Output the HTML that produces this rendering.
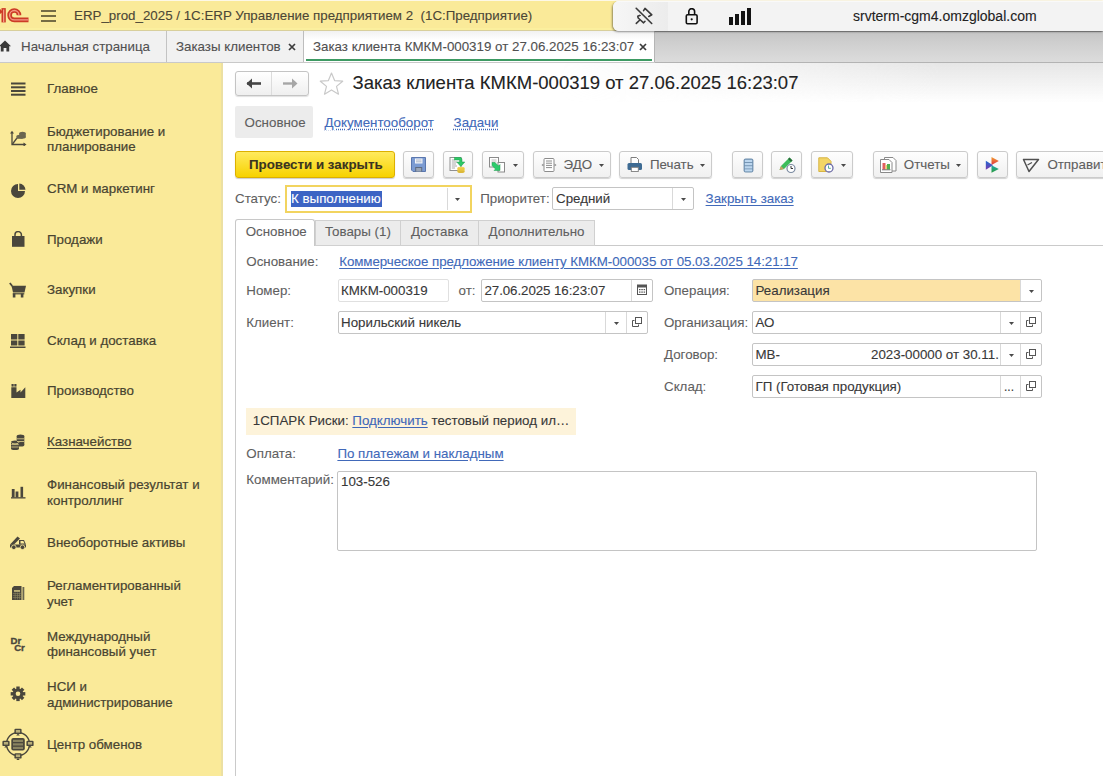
<!DOCTYPE html>
<html><head><meta charset="utf-8"><style>
*{box-sizing:border-box;margin:0;padding:0}
html,body{width:1103px;height:776px;overflow:hidden;background:#fff;font-family:"Liberation Sans",sans-serif;font-size:13.33px;color:#4d4d4d}
.a{position:absolute;white-space:nowrap;-webkit-text-stroke:0.1px currentColor}
.btn{position:absolute;top:151px;height:27px;border:1px solid #cbcbcb;border-radius:3px;background:linear-gradient(#fefefe,#f0f0f0);box-shadow:0 1px 1px rgba(0,0,0,.18)}
.fld{position:absolute;height:23px;border:1px solid #c4c4c4;border-radius:2px;background:#fff}
.dv{position:absolute;width:1px;background:#d9d9d9}
</style></head><body>
<div class="a" style="left:0px;top:0px;width:1103px;height:31px;background:#faea99"></div>
<div class="a" style="left:0px;top:0px;width:1103px;height:1px;background:#fdf8e6"></div>
<div class="a" style="left:0px;top:28px;width:1103px;height:2px;background:#fbef9e"></div>
<div class="a" style="left:0px;top:30px;width:1103px;height:1px;background:#d8cf9c"></div>
<svg class="a" style="left:0px;top:0px" width="30" height="30" viewBox="0 0 30 30"><g fill="none" stroke-linecap="butt">
<path d="M3.65 22.4V8.1" stroke="#cc3b26" stroke-width="4.3"/>
<path d="M1.6 10.5L-1.5 13" stroke="#cc3b26" stroke-width="3.6"/>
<path d="M28.5 19.9H14.3A4.7 4.7 0 0 1 14.3 10.5A4.7 4.7 0 0 1 19 15.2" stroke="#cc3b26" stroke-width="4.6"/>
<path d="M3.65 22.4V9.4" stroke="#f39a86" stroke-width="1.3"/>
<path d="M28.5 19.9H14.3A4.7 4.7 0 0 1 14.3 10.5A4.7 4.7 0 0 1 19 15.2" stroke="#f39a86" stroke-width="1.3"/>
</g></svg>
<div class="a" style="left:41px;top:10px;width:15px;height:2px;background:#756c45"></div>
<div class="a" style="left:41px;top:15px;width:15px;height:2px;background:#756c45"></div>
<div class="a" style="left:41px;top:20px;width:15px;height:2px;background:#756c45"></div>
<div class="a" style="left:74px;top:7.68px;font-size:13.33px;line-height:16px;color:#4b4636;font-weight:normal;">ERP_prod_2025 / 1C:ERP Управление предприятием 2&nbsp; (1С:Предприятие)</div>
<div class="a" style="left:0px;top:31px;width:1103px;height:31px;background:#f1f1f1"></div>
<div class="a" style="left:0px;top:62px;width:1103px;height:1px;background:#c9c9c9"></div>
<div class="a" style="left:655px;top:62px;width:448px;height:1px;background:#b3b3b3"></div>
<div class="a" style="left:560px;top:63px;width:543px;height:40px;background:linear-gradient(#e6e6e6,rgba(255,255,255,0));-webkit-mask-image:linear-gradient(90deg,transparent,#000 70%)"></div>
<div class="a" style="left:655px;top:31px;width:448px;height:31px;background:linear-gradient(#c4c4c4,#cecece 35%,#dcdcdc)"></div>
<div class="a" style="left:655px;top:31px;width:448px;height:1px;background:#a0a0a0"></div>
<div class="a" style="left:166px;top:31px;width:1px;height:31px;background:#c3c3c3"></div>
<div class="a" style="left:303px;top:31px;width:1px;height:31px;background:#bdbdbd"></div>
<div class="a" style="left:654px;top:31px;width:1px;height:31px;background:#b5b5b5"></div>
<div class="a" style="left:304px;top:31px;width:350px;height:31px;background:linear-gradient(#f1f1f1,#fff 30%)"></div>
<div class="a" style="left:306px;top:59px;width:346px;height:2px;background:#3d9a63"></div>
<svg class="a" style="left:-1px;top:40px" width="12" height="12" viewBox="0 0 12 12"><path d="M6 0.5L12 6.2H10.2V11.5H7.4V8H4.6V11.5H1.8V6.2H0Z" fill="#3a3a3a"/></svg>
<div class="a" style="left:21px;top:38.78px;font-size:13.33px;line-height:16px;color:#505050;font-weight:normal;">Начальная страница</div>
<div class="a" style="left:176px;top:38.78px;font-size:13.33px;line-height:16px;color:#505050;font-weight:normal;">Заказы клиентов</div>
<svg class="a" style="left:288px;top:43px" width="8" height="8" viewBox="0 0 8 8"><path d="M1 1L7 7M7 1L1 7" stroke="#3c3c3c" stroke-width="1.7"/></svg>
<div class="a" style="left:313px;top:38.78px;font-size:13.33px;line-height:16px;color:#505050;font-weight:normal;">Заказ клиента КМКМ-000319 от 27.06.2025 16:23:07</div>
<svg class="a" style="left:639px;top:43px" width="8" height="8" viewBox="0 0 8 8"><path d="M1 1L7 7M7 1L1 7" stroke="#3c3c3c" stroke-width="1.7"/></svg>
<div class="a" style="left:613px;top:1px;width:490px;height:30px;background:#f3f3f3;border-radius:6px 0 0 6px;box-shadow:-1px 1px 2px rgba(0,0,0,.4);overflow:hidden"><div class="a" style="left:0px;top:0px;width:55px;height:30px;background:linear-gradient(90deg,#f6f6f6,#ececec)"></div>
<div class="a" style="left:0px;top:0px;width:490px;height:1px;background:#f9f9f9"></div>
</div>
<svg class="a" style="left:634px;top:7px" width="20" height="18" viewBox="0 0 20 18"><g fill="none" stroke="#3a3a3a" stroke-width="1.6" stroke-linejoin="round" stroke-linecap="round">
<path d="M2.3 16.4L5.6 13.2"/>
<path d="M9.6 3.7L11 1.4L17.8 7.8L14.8 9.5"/>
<path d="M6.2 8.3L3.8 9.3L4.2 11L9.6 15.8L11 14.3"/>
<path d="M2.2 1.3L17.7 16.5" stroke="#ededed" stroke-width="3.4"/>
<path d="M2.2 1.3L17.7 16.5"/>
</g></svg>
<svg class="a" style="left:685px;top:8px" width="14" height="17" viewBox="0 0 14 17"><g fill="none" stroke="#111" stroke-width="1.6">
<path d="M3.8 6.8V3.6A2.9 2.9 0 0 1 9.6 3.6V6.8"/>
<rect x="1.3" y="6.8" width="10.8" height="9" rx="1.2"/>
</g><circle cx="6.7" cy="11.3" r="1.1" fill="#111"/></svg>
<div class="a" style="left:729px;top:17px;width:4px;height:8px;background:#141414"></div>
<div class="a" style="left:735px;top:14px;width:4px;height:11px;background:#141414"></div>
<div class="a" style="left:741px;top:11px;width:4px;height:14px;background:#141414"></div>
<div class="a" style="left:747px;top:8px;width:4px;height:17px;background:#141414"></div>
<div class="a" style="left:853px;top:7.65px;font-size:14px;line-height:17px;color:#222;font-weight:normal;">srvterm-cgm4.omzglobal.com</div>
<div class="a" style="left:0px;top:63px;width:222px;height:713px;background:#faea99"></div>
<div class="a" style="left:221px;top:63px;width:2px;height:713px;background:#ece0a2"></div>
<div class="a" style="left:47px;top:80.58px;font-size:13.33px;line-height:15.4px;color:#484431;font-weight:normal;;-webkit-text-stroke:0.2px #484431">Главное</div>
<div class="a" style="left:47px;top:123.83px;font-size:13.33px;line-height:15.4px;color:#484431;font-weight:normal;;-webkit-text-stroke:0.2px #484431">Бюджетирование и<br>планирование</div>
<div class="a" style="left:47px;top:181.48px;font-size:13.33px;line-height:15.4px;color:#484431;font-weight:normal;;-webkit-text-stroke:0.2px #484431">CRM и маркетинг</div>
<div class="a" style="left:47px;top:231.93px;font-size:13.33px;line-height:15.4px;color:#484431;font-weight:normal;;-webkit-text-stroke:0.2px #484431">Продажи</div>
<div class="a" style="left:47px;top:282.38px;font-size:13.33px;line-height:15.4px;color:#484431;font-weight:normal;;-webkit-text-stroke:0.2px #484431">Закупки</div>
<div class="a" style="left:47px;top:332.83px;font-size:13.33px;line-height:15.4px;color:#484431;font-weight:normal;;-webkit-text-stroke:0.2px #484431">Склад и доставка</div>
<div class="a" style="left:47px;top:383.28px;font-size:13.33px;line-height:15.4px;color:#484431;font-weight:normal;;-webkit-text-stroke:0.2px #484431">Производство</div>
<div class="a" style="left:47px;top:434.13px;font-size:13.33px;line-height:15.4px;color:#484431;font-weight:normal;text-decoration:underline;text-underline-offset:2px;-webkit-text-stroke:0.2px #484431">Казначейство</div>
<div class="a" style="left:47px;top:477.38px;font-size:13.33px;line-height:15.4px;color:#484431;font-weight:normal;;-webkit-text-stroke:0.2px #484431">Финансовый результат и<br>контроллинг</div>
<div class="a" style="left:47px;top:535.03px;font-size:13.33px;line-height:15.4px;color:#484431;font-weight:normal;;-webkit-text-stroke:0.2px #484431">Внеоборотные активы</div>
<div class="a" style="left:47px;top:578.28px;font-size:13.33px;line-height:15.4px;color:#484431;font-weight:normal;;-webkit-text-stroke:0.2px #484431">Регламентированный<br>учет</div>
<div class="a" style="left:47px;top:628.73px;font-size:13.33px;line-height:15.4px;color:#484431;font-weight:normal;;-webkit-text-stroke:0.2px #484431">Международный<br>финансовый учет</div>
<div class="a" style="left:47px;top:679.18px;font-size:13.33px;line-height:15.4px;color:#484431;font-weight:normal;;-webkit-text-stroke:0.2px #484431">НСИ и<br>администрирование</div>
<div class="a" style="left:47px;top:736.83px;font-size:13.33px;line-height:15.4px;color:#484431;font-weight:normal;;-webkit-text-stroke:0.2px #484431">Центр обменов</div>
<svg class="a" style="left:11px;top:82px" width="15" height="14" viewBox="0 0 15 14"><g fill="#4a473c"><rect x="0" y="0.5" width="14.5" height="2"/><rect x="0" y="4.3" width="14.5" height="2"/><rect x="0" y="8" width="14.5" height="2"/><rect x="0" y="11.7" width="14.5" height="2"/></g></svg>
<svg class="a" style="left:10px;top:130px" width="17" height="16" viewBox="0 0 17 16"><g fill="none" stroke="#4a473c" stroke-width="1.3"><path d="M2 2V14.5H15"/><path d="M2.5 14L7 8"/></g><path d="M0 3.5L2 0.8L4 3.5Z M13.5 12.5L16.5 14.5L13.5 16.5Z" fill="#4a473c"/><g fill="#6a6650"><ellipse cx="9.5" cy="6.2" rx="3" ry="1.5"/><rect x="6.5" y="6.2" width="6" height="2.6"/><ellipse cx="12.5" cy="3.3" rx="3.3" ry="1.6"/><rect x="9.2" y="3.3" width="6.6" height="4"/><ellipse cx="12.5" cy="7.3" rx="3.3" ry="1.4"/></g></svg>
<svg class="a" style="left:11px;top:183px" width="16" height="16" viewBox="0 0 16 16"><path d="M7 1A7 7 0 1 0 14 8H7Z" fill="#4a473c"/><path d="M8.6 0.2A6.6 6.6 0 0 1 14.8 6.4H8.6Z" fill="#4a473c" transform="translate(-0.3 0.4)"/></svg>
<svg class="a" style="left:11px;top:231px" width="14" height="17" viewBox="0 0 14 17"><rect x="1" y="5" width="12.5" height="10.8" fill="#4a473c"/><path d="M4 6V3.8A3.2 3.2 0 0 1 10.4 3.8V6" fill="none" stroke="#4a473c" stroke-width="1.5"/></svg>
<svg class="a" style="left:9px;top:282px" width="18" height="16" viewBox="0 0 18 16"><path d="M0.8 1L3.2 4" stroke="#4a473c" stroke-width="1.8"/><path d="M2.5 3.8H17L15.5 10.5H4Z" fill="#4a473c"/><rect x="3.8" y="11.2" width="11.5" height="1.2" fill="#4a473c"/><rect x="3.8" y="11.5" width="2.6" height="4" fill="#4a473c"/><rect x="11.8" y="11.5" width="2.6" height="4" fill="#4a473c"/></svg>
<svg class="a" style="left:10px;top:333px" width="16" height="16" viewBox="0 0 16 16"><g fill="#4a473c"><rect x="1" y="1" width="6.3" height="5.5"/><rect x="8.3" y="1" width="6.3" height="5.5"/><rect x="1" y="7.5" width="6.3" height="5"/><rect x="8.3" y="7.5" width="6.3" height="5"/><rect x="0" y="13.5" width="15.5" height="1.5"/></g></svg>
<svg class="a" style="left:11px;top:384px" width="15" height="15" viewBox="0 0 15 15"><g fill="#4a473c"><rect x="0.5" y="0" width="2.2" height="2.6"/><rect x="3.3" y="0" width="2.2" height="2.6"/><path d="M0.3 3.2H5.5V8.5L9.5 5.8V8.5L14.3 3.2V14H0.3Z"/></g></svg>
<svg class="a" style="left:10px;top:434px" width="15" height="16" viewBox="0 0 15 16"><g fill="#4a473c"><ellipse cx="10.5" cy="2" rx="3.8" ry="1.6"/><rect x="6.7" y="2" width="7.6" height="9"/><ellipse cx="10.5" cy="11" rx="3.8" ry="1.5"/><ellipse cx="5" cy="8" rx="4" ry="1.6"/><rect x="1" y="8" width="8" height="6.5"/><ellipse cx="5" cy="14.5" rx="4" ry="1.5"/></g><g stroke="#faea99" stroke-width="0.7" fill="none"><path d="M7 4.8H14M7 7.5H14M1.3 10.6H8.7M1.3 13H8.7"/><path d="M1 8.2A4 1.6 0 0 0 9 8.2"/></g></svg>
<svg class="a" style="left:11px;top:486px" width="15" height="13" viewBox="0 0 15 13"><g fill="#4a473c"><rect x="0.8" y="3" width="2.8" height="8.5"/><rect x="4.6" y="5.5" width="2.8" height="6"/><rect x="9.5" y="0.8" width="2.6" height="10.7"/><rect x="0" y="11.2" width="14.5" height="1.3"/></g></svg>
<svg class="a" style="left:9px;top:535px" width="18" height="15" viewBox="0 0 18 15"><path d="M1 9.5L8.5 1.5L11 3.5L4.5 10Z" fill="#4a473c"/><path d="M1 9.5H17V12.5H1Z" fill="#4a473c"/><path d="M10 5H15L17 9.5H10Z" fill="#4a473c"/><path d="M11.5 6H14.3L15.6 8.5H11.5Z" fill="#faea99"/><circle cx="4.8" cy="12.3" r="2.3" fill="#4a473c" stroke="#faea99" stroke-width="0.8"/><circle cx="13.5" cy="12.3" r="2.3" fill="#4a473c" stroke="#faea99" stroke-width="0.8"/></svg>
<svg class="a" style="left:11px;top:585px" width="14" height="16" viewBox="0 0 14 16"><path d="M1 3L3 1H10.5V15H1Z" fill="#4a473c"/><rect x="11.5" y="2" width="1.8" height="13" fill="#6a6650"/><rect x="3" y="5.2" width="6" height="1.5" fill="#faea99" opacity="0.8"/><g fill="#8a8460"><rect x="1.8" y="8" width="8" height="0.6"/><rect x="1.8" y="10.2" width="8" height="0.6"/><rect x="1.8" y="12.4" width="8" height="0.6"/><rect x="3.8" y="7.5" width="0.6" height="7"/><rect x="6" y="7.5" width="0.6" height="7"/><rect x="8.2" y="7.5" width="0.6" height="7"/></g></svg>
<div class="a" style="left:10.6px;top:635.07px;font-size:9.6px;line-height:11px;color:#4a473c;font-weight:bold;-webkit-text-stroke:0.35px #4a473c">Dr</div>
<div class="a" style="left:14.2px;top:641.97px;font-size:9.6px;line-height:11px;color:#4a473c;font-weight:bold;-webkit-text-stroke:0.35px #4a473c">Cr</div>
<svg class="a" style="left:10px;top:686px" width="16" height="16" viewBox="0 0 16 16"><g transform="translate(8 7.8)" fill="#4a473c"><circle r="5.2"/><rect x="-1.7" y="-7.3" width="3.4" height="3.3" transform="rotate(0)"/><rect x="-1.7" y="-7.3" width="3.4" height="3.3" transform="rotate(45)"/><rect x="-1.7" y="-7.3" width="3.4" height="3.3" transform="rotate(90)"/><rect x="-1.7" y="-7.3" width="3.4" height="3.3" transform="rotate(135)"/><rect x="-1.7" y="-7.3" width="3.4" height="3.3" transform="rotate(180)"/><rect x="-1.7" y="-7.3" width="3.4" height="3.3" transform="rotate(225)"/><rect x="-1.7" y="-7.3" width="3.4" height="3.3" transform="rotate(270)"/><rect x="-1.7" y="-7.3" width="3.4" height="3.3" transform="rotate(315)"/></g><circle cx="8" cy="7.8" r="2.3" fill="#faea99"/></svg>
<svg class="a" style="left:2px;top:728px" width="32" height="32" viewBox="0 0 32 32"><circle cx="16" cy="16" r="11.5" fill="none" stroke="#4a473c" stroke-width="1.4"/><rect x="12.4" y="0.7000000000000002" width="7.2" height="5.4" rx="1.2" fill="#4a473c"/><rect x="13.9" y="2" width="4.2" height="2.6" fill="#b8ae78"/><path d="M14.2 7.6H17.8L16 5.6Z" fill="#4a473c"/><rect x="12.4" y="25.2" width="7.2" height="5.4" rx="1.2" fill="#4a473c"/><rect x="13.9" y="26.5" width="4.2" height="2.6" fill="#b8ae78"/><path d="M14.2 32.1H17.8L16 30.1Z" fill="#4a473c"/><rect x="0.3999999999999999" y="12.7" width="7.2" height="5.4" rx="1.2" fill="#4a473c"/><rect x="1.9" y="14" width="4.2" height="2.6" fill="#b8ae78"/><path d="M2.2 19.6H5.8L4 17.6Z" fill="#4a473c"/><rect x="24.4" y="12.7" width="7.2" height="5.4" rx="1.2" fill="#4a473c"/><rect x="25.9" y="14" width="4.2" height="2.6" fill="#b8ae78"/><path d="M26.2 19.6H29.8L28 17.6Z" fill="#4a473c"/><rect x="9.3" y="10" width="13.5" height="12.5" rx="2" fill="#4a473c"/><g fill="#8a8460"><rect x="11" y="11.8" width="10" height="2.2"/><rect x="11" y="15.3" width="10" height="2.2"/><rect x="11" y="18.8" width="10" height="2.2"/></g></svg>
<div class="a" style="left:235px;top:71px;width:74px;height:25px;border:1px solid #c4c4c4;border-radius:3px;background:linear-gradient(#fff,#efefef);box-shadow:0 1px 1px rgba(0,0,0,.12)"></div>
<div class="a" style="left:271px;top:72px;width:1px;height:23px;background:#dcdcdc"></div>
<svg class="a" style="left:246px;top:78px" width="16" height="11" viewBox="0 0 16 11"><path d="M1 5.5H15" stroke="#454545" stroke-width="2.6"/><path d="M0.5 5.5L6 0.5V10.5Z" fill="#454545"/></svg>
<svg class="a" style="left:282px;top:78px" width="16" height="11" viewBox="0 0 16 11"><path d="M1 5.5H14" stroke="#a6a6a6" stroke-width="2.4"/><path d="M15.5 5.5L10 0.5V10.5Z" fill="#a6a6a6"/></svg>
<svg class="a" style="left:319px;top:72px" width="25" height="23" viewBox="0 0 25 23"><path d="M12.5 1L15.6 8.6L23.7 9.2L17.5 14.4L19.5 22.2L12.5 17.9L5.5 22.2L7.5 14.4L1.3 9.2L9.4 8.6Z" fill="none" stroke="#c9c9c9" stroke-width="1.2" stroke-linejoin="round"/></svg>
<div class="a" style="left:352.5px;top:72.09px;font-size:18.5px;line-height:22px;color:#222;font-weight:normal;">Заказ клиента КМКМ-000319 от 27.06.2025 16:23:07</div>
<div class="a" style="left:235px;top:106px;width:78px;height:32px;background:#ececec;border-radius:2px"></div>
<div class="a" style="left:244.6px;top:114.98px;font-size:13.33px;line-height:16px;color:#5f5f5f;font-weight:normal;">Основное</div>
<div class="a" style="left:324.4px;top:114.98px;font-size:13.33px;line-height:16px;color:#4169b9;font-weight:normal;text-decoration:underline dotted;text-underline-offset:2px">Документооборот</div>
<div class="a" style="left:453.6px;top:114.98px;font-size:13.33px;line-height:16px;color:#4169b9;font-weight:normal;text-decoration:underline dotted;text-underline-offset:2px">Задачи</div>
<div class="a" style="left:235px;top:151px;width:160px;height:27px;border:1px solid #dcb000;border-radius:3px;background:linear-gradient(#ffea5e,#f7d200);box-shadow:0 1px 1px rgba(0,0,0,.2)"></div>
<div class="a" style="left:249px;top:156.58px;font-size:13.33px;line-height:16px;color:#3a3420;font-weight:bold;">Провести и закрыть</div>
<div class="btn" style="left:403px;width:31px"></div>
<div class="btn" style="left:443px;width:30px"></div>
<div class="btn" style="left:482px;width:42px"></div>
<div class="btn" style="left:533px;width:78px"></div>
<div class="btn" style="left:619px;width:93px"></div>
<div class="btn" style="left:732px;width:31px"></div>
<div class="btn" style="left:771px;width:31px"></div>
<div class="btn" style="left:811px;width:42px"></div>
<div class="btn" style="left:873px;width:95px"></div>
<div class="btn" style="left:977px;width:31px"></div>
<div class="btn" style="left:1016px;width:100px"></div>
<svg class="a" style="left:512.5px;top:163.5px" width="5" height="3" viewBox="0 0 5 3"><path d="M0 0H5L2.5 3Z" fill="#4a4a4a"/></svg>
<svg class="a" style="left:598.5px;top:163.5px" width="5" height="3" viewBox="0 0 5 3"><path d="M0 0H5L2.5 3Z" fill="#4a4a4a"/></svg>
<svg class="a" style="left:699.5px;top:163.5px" width="5" height="3" viewBox="0 0 5 3"><path d="M0 0H5L2.5 3Z" fill="#4a4a4a"/></svg>
<svg class="a" style="left:840.5px;top:163.5px" width="5" height="3" viewBox="0 0 5 3"><path d="M0 0H5L2.5 3Z" fill="#4a4a4a"/></svg>
<svg class="a" style="left:955.5px;top:163.5px" width="5" height="3" viewBox="0 0 5 3"><path d="M0 0H5L2.5 3Z" fill="#4a4a4a"/></svg>
<div class="a" style="left:563.6px;top:157.38px;font-size:13.33px;line-height:16px;color:#5f5f5f;font-weight:normal;">ЭДО</div>
<div class="a" style="left:650px;top:157.38px;font-size:13.33px;line-height:16px;color:#5f5f5f;font-weight:normal;">Печать</div>
<div class="a" style="left:903.8px;top:157.38px;font-size:13.33px;line-height:16px;color:#5f5f5f;font-weight:normal;">Отчеты</div>
<div class="a" style="left:1047.4px;top:157.38px;font-size:13.33px;line-height:16px;color:#5f5f5f;font-weight:normal;">Отправить</div>
<div class="a" style="left:235px;top:190.78px;font-size:13.33px;line-height:16px;color:#5f5f5f;font-weight:normal;">Статус:</div>
<div class="a" style="left:285px;top:185px;width:187px;height:28px;border:2px solid #f2d45f;background:#fff"></div>
<div class="a" style="left:447px;top:188px;width:1px;height:22px;background:#d9d9d9"></div>
<div class="a" style="left:291px;top:191px;width:91px;height:16px;background:#3c64c4"></div>
<div class="a" style="left:291px;top:190.78px;font-size:13.33px;line-height:16px;color:#fff;font-weight:normal;">К выполнению</div>
<svg class="a" style="left:454.5px;top:197.5px" width="5" height="3" viewBox="0 0 5 3"><path d="M0 0H5L2.5 3Z" fill="#4a4a4a"/></svg>
<div class="a" style="left:480.2px;top:190.78px;font-size:13.33px;line-height:16px;color:#5f5f5f;font-weight:normal;">Приоритет:</div>
<div class="fld" style="left:552px;top:187px;width:142px"></div>
<div class="a" style="left:672px;top:188px;width:1px;height:21px;background:#d9d9d9"></div>
<svg class="a" style="left:680.5px;top:197.5px" width="5" height="3" viewBox="0 0 5 3"><path d="M0 0H5L2.5 3Z" fill="#4a4a4a"/></svg>
<div class="a" style="left:556px;top:190.78px;font-size:13.33px;line-height:16px;color:#383838;font-weight:normal;">Средний</div>
<div class="a" style="left:705.6px;top:190.78px;font-size:13.33px;line-height:16px;color:#4169b9;font-weight:normal;text-decoration:underline;text-underline-offset:2px">Закрыть заказ</div>
<div class="a" style="left:235px;top:245px;width:868px;height:1px;background:#cacaca"></div>
<div class="a" style="left:235px;top:245px;width:1px;height:531px;background:#cacaca"></div>
<div class="a" style="left:315px;top:220px;width:86px;height:26px;background:#ececec;border:1px solid #d0d0d0"></div>
<div class="a" style="left:400px;top:220px;width:79px;height:26px;background:#ececec;border:1px solid #d0d0d0"></div>
<div class="a" style="left:478px;top:220px;width:117px;height:26px;background:#ececec;border:1px solid #d0d0d0"></div>
<div class="a" style="left:235px;top:219px;width:80px;height:27px;background:#fff;border:1px solid #c8c8c8;border-bottom:none;border-radius:3px 3px 0 0"></div>
<div class="a" style="left:236px;top:245px;width:78px;height:1px;background:#fff"></div>
<div class="a" style="left:245.7px;top:223.58px;font-size:13.33px;line-height:16px;color:#5f5f5f;font-weight:normal;">Основное</div>
<div class="a" style="left:325px;top:224.08px;font-size:13.33px;line-height:16px;color:#5f5f5f;font-weight:normal;">Товары (1)</div>
<div class="a" style="left:410.9px;top:224.08px;font-size:13.33px;line-height:16px;color:#5f5f5f;font-weight:normal;">Доставка</div>
<div class="a" style="left:488.6px;top:224.08px;font-size:13.33px;line-height:16px;color:#5f5f5f;font-weight:normal;">Дополнительно</div>
<div class="a" style="left:246.3px;top:253.88px;font-size:13.33px;line-height:16px;color:#5f5f5f;font-weight:normal;">Основание:</div>
<div class="a" style="left:339.2px;top:253.68px;font-size:13.33px;line-height:16px;color:#4169b9;font-weight:normal;text-decoration:underline;text-underline-offset:2px;letter-spacing:-0.06px">Коммерческое предложение клиенту КМКМ-000035 от 05.03.2025 14:21:17</div>
<div class="a" style="left:246.3px;top:282.68px;font-size:13.33px;line-height:16px;color:#5f5f5f;font-weight:normal;">Номер:</div>
<div class="fld" style="left:338px;top:279px;width:111px;border-color:#e0e0e0"></div>
<div class="a" style="left:341px;top:282.68px;font-size:13.33px;line-height:16px;color:#383838;font-weight:normal;">КМКМ-000319</div>
<div class="a" style="left:458.6px;top:282.68px;font-size:13.33px;line-height:16px;color:#5f5f5f;font-weight:normal;">от:</div>
<div class="fld" style="left:481px;top:279px;width:172px"></div>
<div class="a" style="left:631px;top:280px;width:1px;height:21px;background:#d9d9d9"></div>
<div class="a" style="left:484.5px;top:282.68px;font-size:13.33px;line-height:16px;color:#383838;font-weight:normal;letter-spacing:-0.08px">27.06.2025 16:23:07</div>
<svg class="a" style="left:637px;top:284px" width="10" height="11" viewBox="0 0 10 11"><rect x="0.5" y="1" width="9" height="9.5" fill="none" stroke="#555" stroke-width="1"/><rect x="0.5" y="1" width="9" height="2.5" fill="#555"/><g fill="#555"><rect x="2" y="5" width="1.5" height="1.2"/><rect x="4.3" y="5" width="1.5" height="1.2"/><rect x="6.6" y="5" width="1.5" height="1.2"/><rect x="2" y="7.5" width="1.5" height="1.2"/><rect x="4.3" y="7.5" width="1.5" height="1.2"/><rect x="6.6" y="7.5" width="1.5" height="1.2"/></g></svg>
<div class="a" style="left:246.3px;top:314.68px;font-size:13.33px;line-height:16px;color:#5f5f5f;font-weight:normal;">Клиент:</div>
<div class="fld" style="left:338px;top:311px;width:310px"></div>
<div class="a" style="left:605px;top:312px;width:1px;height:21px;background:#d9d9d9"></div>
<div class="a" style="left:626px;top:312px;width:1px;height:21px;background:#d9d9d9"></div>
<div class="a" style="left:341px;top:314.68px;font-size:13.33px;line-height:16px;color:#383838;font-weight:normal;">Норильский никель</div>
<svg class="a" style="left:613.5px;top:321.5px" width="5" height="3" viewBox="0 0 5 3"><path d="M0 0H5L2.5 3Z" fill="#4a4a4a"/></svg>
<svg class="a" style="left:632px;top:317px" width="10" height="10" viewBox="0 0 10 10"><rect x="3.5" y="0.5" width="6" height="6" fill="#fff" stroke="#555" stroke-width="1"/><path d="M2.5 3.5H0.5V9.5H6.5V7.5" fill="none" stroke="#555" stroke-width="1"/></svg>
<div class="a" style="left:664px;top:282.68px;font-size:13.33px;line-height:16px;color:#5f5f5f;font-weight:normal;">Операция:</div>
<div class="fld" style="left:752px;top:279px;width:290px;background:linear-gradient(90deg,#fce3a6 268px,#fff 268px)"></div>
<div class="a" style="left:1020px;top:280px;width:1px;height:21px;background:#d9d9d9"></div>
<div class="a" style="left:755.5px;top:282.68px;font-size:13.33px;line-height:16px;color:#383838;font-weight:normal;">Реализация</div>
<svg class="a" style="left:1028.5px;top:289.5px" width="5" height="3" viewBox="0 0 5 3"><path d="M0 0H5L2.5 3Z" fill="#4a4a4a"/></svg>
<div class="a" style="left:664px;top:314.68px;font-size:13.33px;line-height:16px;color:#5f5f5f;font-weight:normal;">Организация:</div>
<div class="fld" style="left:752px;top:311px;width:290px"></div>
<div class="a" style="left:1000px;top:312px;width:1px;height:21px;background:#d9d9d9"></div>
<div class="a" style="left:1020px;top:312px;width:1px;height:21px;background:#d9d9d9"></div>
<div class="a" style="left:755.5px;top:314.68px;font-size:13.33px;line-height:16px;color:#383838;font-weight:normal;">АО</div>
<svg class="a" style="left:1008.5px;top:321.5px" width="5" height="3" viewBox="0 0 5 3"><path d="M0 0H5L2.5 3Z" fill="#4a4a4a"/></svg>
<svg class="a" style="left:1026px;top:317px" width="10" height="10" viewBox="0 0 10 10"><rect x="3.5" y="0.5" width="6" height="6" fill="#fff" stroke="#555" stroke-width="1"/><path d="M2.5 3.5H0.5V9.5H6.5V7.5" fill="none" stroke="#555" stroke-width="1"/></svg>
<div class="a" style="left:664px;top:346.68px;font-size:13.33px;line-height:16px;color:#5f5f5f;font-weight:normal;">Договор:</div>
<div class="fld" style="left:752px;top:343px;width:290px"></div>
<div class="a" style="left:1000px;top:344px;width:1px;height:21px;background:#d9d9d9"></div>
<div class="a" style="left:1020px;top:344px;width:1px;height:21px;background:#d9d9d9"></div>
<div class="a" style="left:755.5px;top:346.68px;font-size:13.33px;line-height:16px;color:#383838;font-weight:normal;">МВ-</div>
<svg class="a" style="left:1008.5px;top:353.5px" width="5" height="3" viewBox="0 0 5 3"><path d="M0 0H5L2.5 3Z" fill="#4a4a4a"/></svg>
<svg class="a" style="left:1026px;top:349px" width="10" height="10" viewBox="0 0 10 10"><rect x="3.5" y="0.5" width="6" height="6" fill="#fff" stroke="#555" stroke-width="1"/><path d="M2.5 3.5H0.5V9.5H6.5V7.5" fill="none" stroke="#555" stroke-width="1"/></svg>
<div class="a" style="left:664px;top:378.68px;font-size:13.33px;line-height:16px;color:#5f5f5f;font-weight:normal;">Склад:</div>
<div class="fld" style="left:752px;top:375px;width:290px"></div>
<div class="a" style="left:1000px;top:376px;width:1px;height:21px;background:#d9d9d9"></div>
<div class="a" style="left:1020px;top:376px;width:1px;height:21px;background:#d9d9d9"></div>
<div class="a" style="left:755.5px;top:378.68px;font-size:13.33px;line-height:16px;color:#383838;font-weight:normal;">ГП (Готовая продукция)</div>
<div class="a" style="left:1004px;top:380.14px;font-size:12px;line-height:14px;color:#383838;font-weight:normal;">...</div>
<svg class="a" style="left:1026px;top:381px" width="10" height="10" viewBox="0 0 10 10"><rect x="3.5" y="0.5" width="6" height="6" fill="#fff" stroke="#555" stroke-width="1"/><path d="M2.5 3.5H0.5V9.5H6.5V7.5" fill="none" stroke="#555" stroke-width="1"/></svg>
<div class="a" style="left:871px;top:346.68px;font-size:13.33px;line-height:16px;color:#383838;font-weight:normal;">2023-00000 от 30.11.</div>
<div class="a" style="left:246px;top:408px;width:330px;height:27px;background:#fdf3da"></div>
<div class="a" style="left:252.8px;top:412.68px;font-size:13.33px;line-height:16px;color:#383838;font-weight:normal;">1СПАРК Риски: <span style="color:#3f67b8;text-decoration:underline;text-underline-offset:2px">Подключить</span> тестовый период ил…</div>
<div class="a" style="left:246.3px;top:445.58px;font-size:13.33px;line-height:16px;color:#5f5f5f;font-weight:normal;">Оплата:</div>
<div class="a" style="left:337.4px;top:445.58px;font-size:13.33px;line-height:16px;color:#4169b9;font-weight:normal;text-decoration:underline;text-underline-offset:2px">По платежам и накладным</div>
<div class="a" style="left:246.3px;top:472.18px;font-size:13.33px;line-height:16px;color:#5f5f5f;font-weight:normal;">Комментарий:</div>
<div class="a" style="left:337px;top:471px;width:700px;height:80px;border:1px solid #c4c4c4;border-radius:2px;background:#fff"></div>
<div class="a" style="left:341px;top:474.38px;font-size:13.33px;line-height:16px;color:#383838;font-weight:normal;">103-526</div>
<svg class="a" style="left:411px;top:157px" width="15" height="15" viewBox="0 0 15 15"><path d="M0.5 0.5H14.5V14.5H2L0.5 13Z" fill="#7b9bd2" stroke="#5a77ae" stroke-width="1"/>
<rect x="4" y="1.5" width="7.5" height="5" fill="#f4f6fa"/><path d="M5 3H10.5M5 4.8H10.5" stroke="#9aa7bd" stroke-width="0.8"/>
<rect x="4.2" y="10" width="7" height="4.5" fill="#5e6b80"/><rect x="5.2" y="11" width="5" height="3.5" fill="#9aa5b6"/></svg>
<svg class="a" style="left:449px;top:157px" width="17" height="17" viewBox="0 0 17 17"><rect x="1" y="0.5" width="11" height="13" fill="#fff" stroke="#909090" stroke-width="1"/>
<path d="M2.8 3H6M2.8 5H8M2.8 7H7M2.8 9H8M2.8 11H6" stroke="#a0a0a0" stroke-width="0.9"/>
<path d="M5.5 0.3H10.5A2.5 2.5 0 0 1 13 2.8V5H15.8L11.8 9.5L7.8 5H10.6V3H5.5Z" fill="#2dc866" stroke="#1c9a4a" stroke-width="0.5"/>
<ellipse cx="12" cy="11.2" rx="3.6" ry="1.4" fill="#f2d458"/><rect x="8.4" y="11.2" width="7.2" height="3.6" fill="#e9c843"/><ellipse cx="12" cy="14.8" rx="3.6" ry="1.3" fill="#dcb838"/></svg>
<svg class="a" style="left:488px;top:156px" width="18" height="17" viewBox="0 0 18 17"><rect x="1.5" y="1.5" width="9" height="9.5" fill="#fff" stroke="#8a8a8a" stroke-width="1"/>
<path d="M3.5 4H8.5M3.5 6H8.5" stroke="#aaa" stroke-width="0.8"/>
<rect x="10" y="6.5" width="6.5" height="9.5" fill="#fff" stroke="#8a8a8a" stroke-width="1"/>
<path d="M4 6.5L4 9.5L7.5 13L6 14.5H12V8.5L10.5 10L7 6.5Z" fill="#2ccc6c" stroke="#1e9a4e" stroke-width="0.5"/></svg>
<svg class="a" style="left:541px;top:158px" width="16" height="14" viewBox="0 0 16 14"><rect x="3" y="0.5" width="10" height="13" rx="1" fill="#fff" stroke="#8c8c8c" stroke-width="1"/>
<path d="M5 3H11M5 5.2H11M5 7.4H11M5 9.6H11" stroke="#8c8c8c" stroke-width="1"/>
<path d="M0.5 7L2.5 5.5V8.5Z M15.5 7L13.5 5.5V8.5Z" fill="#8c8c8c"/></svg>
<svg class="a" style="left:627px;top:157px" width="16" height="15" viewBox="0 0 16 15"><path d="M4 0.5H9.5L11.5 2.5V6.5H4Z" fill="#fff" stroke="#7d7d7d" stroke-width="1"/>
<rect x="0.5" y="6" width="14.5" height="7" rx="1.5" fill="#3e6b93"/>
<rect x="4.3" y="10.3" width="7" height="4.2" fill="#fff" stroke="#7d7d7d" stroke-width="0.9"/></svg>
<svg class="a" style="left:743px;top:158px" width="11" height="15" viewBox="0 0 11 15"><rect x="0.6" y="0.6" width="9.8" height="13.8" rx="2" fill="#6f8fae"/>
<g fill="#bcd6ee"><rect x="1.8" y="1.8" width="7.4" height="2.3"/><rect x="1.8" y="5" width="7.4" height="2.3"/><rect x="1.8" y="8.2" width="7.4" height="2.3"/><rect x="1.8" y="11.3" width="7.4" height="2.1"/></g></svg>
<svg class="a" style="left:778px;top:157px" width="18" height="17" viewBox="0 0 18 17"><path d="M1.5 13L3 9L11.5 0.5L14.5 3.5L6 12Z" fill="#3dbd5b"/>
<path d="M11.5 0.5L14.5 3.5L13 5L10 2Z" fill="#2b6b3a"/>
<path d="M1.5 13L3 9L6 12Z" fill="#c9a067"/>
<circle cx="13" cy="11.5" r="4" fill="#fff" stroke="#7a8aa0" stroke-width="1.2"/>
<path d="M13 9V11.5H15" fill="none" stroke="#333" stroke-width="1"/></svg>
<svg class="a" style="left:818px;top:157px" width="17" height="16" viewBox="0 0 17 16"><path d="M0.8 0.8H9.5L13 4.3V14.5H0.8Z" fill="#f3d565" stroke="#d7b444" stroke-width="1"/>
<circle cx="11" cy="11" r="4" fill="#fff" stroke="#6a6aa8" stroke-width="1.3"/>
<path d="M10.5 8.5V11.3H12.8" fill="none" stroke="#5a9" stroke-width="1"/></svg>
<svg class="a" style="left:880px;top:157px" width="17" height="16" viewBox="0 0 17 16"><path d="M4.5 0.5H13L16 3.5V14H4.5Z" fill="#fff" stroke="#8a8a8a" stroke-width="1"/>
<path d="M0.5 2.5H9L12 5.5V15.5H0.5Z" fill="#fff" stroke="#8a8a8a" stroke-width="1"/>
<rect x="2.5" y="6" width="3" height="6.5" fill="#e26060"/><rect x="5.5" y="8" width="1.5" height="4.5" fill="#e8d070"/><rect x="7" y="7" width="3" height="5.5" fill="#4fb04f"/>
<path d="M2 12.8H10.5" stroke="#555" stroke-width="0.8"/></svg>
<svg class="a" style="left:985px;top:157px" width="15" height="16" viewBox="0 0 15 16"><defs><linearGradient id="g1" x1="0" y1="0" x2="0" y2="1"><stop offset="0" stop-color="#f2a030"/><stop offset="1" stop-color="#e03040"/></linearGradient>
<linearGradient id="g2" x1="0" y1="0" x2="0" y2="1"><stop offset="0" stop-color="#1e6ad0"/><stop offset="1" stop-color="#7a38b0"/></linearGradient>
<linearGradient id="g3" x1="0" y1="0" x2="0" y2="1"><stop offset="0" stop-color="#20a8b0"/><stop offset="1" stop-color="#2a9a3a"/></linearGradient></defs>
<path d="M6.5 0L13.8 4L6.5 8Z" fill="url(#g1)"/>
<path d="M0.8 3.8L8 8.3L0.8 12.8Z" fill="url(#g2)"/>
<path d="M6.5 8.2L13.8 12L6.5 15.8Z" fill="url(#g3)"/></svg>
<svg class="a" style="left:1022px;top:158px" width="19" height="15" viewBox="0 0 19 15"><path d="M1.5 1.5H16.5L7 13.5Z" fill="none" stroke="#505050" stroke-width="1.5" stroke-linejoin="round"/>
<path d="M5.5 7L10 4.5" stroke="#505050" stroke-width="1.3"/></svg>
</body></html>
